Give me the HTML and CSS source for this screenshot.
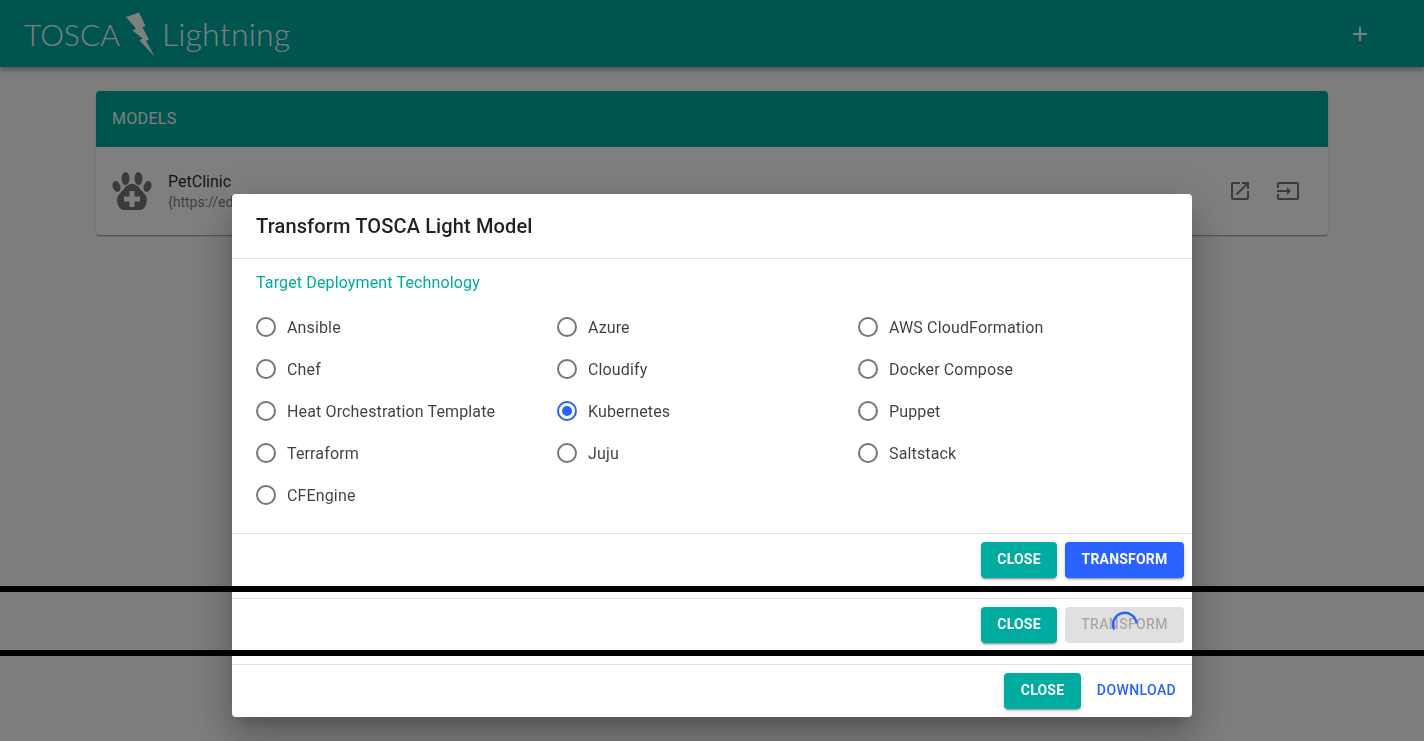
FILE: index.html
```html
<!DOCTYPE html>
<html lang="en">
  <head>
    <meta charset="UTF-8" />
    <meta name="viewport" content="width=device-width, initial-scale=1.0" />
    <title>TOSCA Lightning</title>
    <link rel="stylesheet" href="styles.css">
  </head>
  <body>
    <header class="topbar">
      <div class="logo">
        <span>TOSCA</span>
        <svg class="bolt" width="34" height="48" viewBox="124 8 34 48">
          <polygon fill="#fff" points="126,15 139,10.5 145.5,24 142.5,25.5 149,37.5 146,38.5 154.5,54.5 139.5,38.5 142.5,36.5 132.5,28.5 136,26.5" />
        </svg>
        <span class="logo-second">Lightning</span>
      </div>
      <svg class="add" width="24" height="24" viewBox="0 0 24 24">
        <path d="M19 13h-6v6h-2v-6H5v-2h6V5h2v6h6v2z" />
      </svg>
    </header>

    <main class="page">
      <section class="card">
        <h2 class="card-title">MODELS</h2>
        <div class="model">
          <svg class="paw" width="40" height="38" viewBox="0 0 40 38">
            <ellipse cx="4.500" cy="14.500" rx="3.800" ry="5.600" transform="rotate(-18 4.500 14.500)" />
            <ellipse cx="13.500" cy="6.500" rx="4" ry="6.500" />
            <ellipse cx="26.500" cy="6.500" rx="4" ry="6.500" />
            <ellipse cx="35.500" cy="14.500" rx="3.800" ry="5.600" transform="rotate(18 35.500 14.500)" />
            <path fill-rule="evenodd" d="M20 12c4 0 6.500 2.500 8.500 5.500 1.500 2.300 4 3.800 5.500 6.500 1.700 3.500 1 10-3 13-1.200.8-2.500 1-4 1H13c-1.500 0-2.800-.2-4-1-4-3-4.700-9.500-3-13 1.500-2.700 4-4.200 5.500-6.500C13.500 14.500 16 12 20 12zM17.500 19v5.500H12v5h5.500V35h5v-5.500H28v-5h-5.500V19z" />
          </svg>
          <div class="model-text">
            <div class="model-name">PetClinic</div>
            <div class="model-url">{https://edmm</div>
          </div>
          <div class="model-actions">
            <svg width="24" height="24" viewBox="0 0 24 24">
              <path d="M19 19H5V5h7V3H5c-1.110 0-2 .9-2 2v14c0 1.100.89 2 2 2h14c1.100 0 2-.89 2-2v-7h-2v7zM14 3v2h3.590l-9.830 9.830 1.410 1.410L19 6.410V10h2V3h-7z" />
            </svg>
            <svg width="24" height="24" viewBox="0 0 24 24">
              <path d="M21 3.010H3c-1.100 0-2 .9-2 2V9h2V4.990h18v14.030H3V15H1v4.010c0 1.100.9 1.980 2 1.980h18c1.100 0 2-.88 2-1.980v-14c0-1.110-.9-2-2-2zM11 16l4-4-4-4v3H1v2h10v3z" />
            </svg>
          </div>
        </div>
      </section>
    </main>

    <div class="backdrop">
      <div class="dialog">
        <h1 class="dialog-title">Transform TOSCA Light Model</h1>
        <div class="dialog-content">
          <div class="group-label">Target Deployment Technology</div>
          <div class="radios">
            <div class="radio"><span class="dot"></span>Ansible</div>
            <div class="radio"><span class="dot"></span>Azure</div>
            <div class="radio"><span class="dot"></span>AWS CloudFormation</div>
            <div class="radio"><span class="dot"></span>Chef</div>
            <div class="radio"><span class="dot"></span>Cloudify</div>
            <div class="radio"><span class="dot"></span>Docker Compose</div>
            <div class="radio"><span class="dot"></span>Heat Orchestration Template</div>
            <div class="radio"><span class="dot checked"></span>Kubernetes</div>
            <div class="radio"><span class="dot"></span>Puppet</div>
            <div class="radio"><span class="dot"></span>Terraform</div>
            <div class="radio"><span class="dot"></span>Juju</div>
            <div class="radio"><span class="dot"></span>Saltstack</div>
            <div class="radio"><span class="dot"></span>CFEngine</div>
          </div>
        </div>
        <div class="actions">
          <button class="btn teal">CLOSE</button>
          <button class="btn blue">TRANSFORM</button>
        </div>
        <div class="actions second">
          <button class="btn teal">CLOSE</button>
          <div class="busy">
            <button class="btn disabled">TRANSFORM</button>
            <svg class="spinner" width="28" height="28" viewBox="0 0 28 28">
              <path d="M3.100 18.500A11.800 11.800 0 1 1 25.600 12.500" />
            </svg>
          </div>
        </div>
        <div class="actions third">
          <button class="btn teal wide">CLOSE</button>
          <button class="btn flat">DOWNLOAD</button>
        </div>
      </div>
    </div>

    <div class="cut cut-one"></div>
    <div class="cut cut-two"></div>
  </body>
</html>
```

FILE: styles.css
```css
* {
  box-sizing: border-box;
}

html,
body {
  height: 741px;
  overflow: hidden;
}

body {
  margin: 0;
  font-family: Roboto, "Liberation Sans", sans-serif;
  color: rgba(0, 0, 0, 0.87);
  background-color: #fafafa;
}

.topbar {
  display: flex;
  align-items: center;
  justify-content: space-between;
  height: 67px;
  padding: 0 52px 0 24px;
  color: #fff;
  background-color: #00ab9f;
  box-shadow: 0 2px 4px -1px rgba(0, 0, 0, 0.2), 0 4px 5px rgba(0, 0, 0, 0.14), 0 1px 10px rgba(0, 0, 0, 0.12);
}

.logo {
  display: flex;
  align-items: center;
  font-family: Lato, sans-serif;
  font-size: 30px;
  font-weight: 300;
}

.logo-second {
  font-size: 32px;
  letter-spacing: 0.2px;
}

.bolt {
  margin: 0 4px;
}

.add {
  fill: #fff;
}

.page {
  padding: 24px 96px;
}

.card {
  overflow: hidden;
  background-color: #fff;
  border-radius: 4px;
  box-shadow: 0 2px 1px -1px rgba(0, 0, 0, 0.2), 0 1px 1px rgba(0, 0, 0, 0.14), 0 1px 3px rgba(0, 0, 0, 0.12);
}

.card-title {
  height: 56px;
  margin: 0;
  padding: 0 16px;
  font-size: 16px;
  font-weight: 400;
  line-height: 55px;
  letter-spacing: 0.3px;
  color: #fff;
  background-color: #00ab9f;
}

.model {
  display: flex;
  align-items: center;
  height: 88px;
  padding: 0 16px;
}

.paw {
  fill: #757575;
}

.model-text {
  flex: 1;
  margin-left: 16px;
  padding-top: 2px;
}

.model-name {
  font-size: 16px;
  line-height: 20px;
}

.model-url {
  font-size: 14px;
  line-height: 20px;
  color: rgba(0, 0, 0, 0.54);
}

.model-actions {
  display: flex;
  gap: 24px;
  margin-right: 12px;
}

.model-actions svg {
  fill: rgba(0, 0, 0, 0.54);
}

.backdrop {
  position: fixed;
  top: 0;
  right: 0;
  bottom: 0;
  left: 0;
  display: flex;
  justify-content: center;
  padding-top: 194px;
  background-color: rgba(0, 0, 0, 0.5);
}

.dialog {
  width: 960px;
  height: 523px;
  background-color: #fff;
  border-radius: 4px;
  box-shadow: 0 11px 15px -7px rgba(0, 0, 0, 0.2), 0 24px 38px 3px rgba(0, 0, 0, 0.14), 0 9px 46px 8px rgba(0, 0, 0, 0.12);
}

.dialog-title {
  height: 64px;
  margin: 0;
  padding: 16px 24px;
  font-size: 20px;
  font-weight: 500;
  line-height: 32px;
  letter-spacing: 0.14px;
}

.dialog-content {
  height: 275px;
  padding: 14px 24px 0;
  border-top: 1px solid #e0e0e0;
}

.group-label {
  font-size: 16px;
  line-height: 20px;
  color: #00ab9f;
  letter-spacing: 0.14px;
}

.radios {
  display: grid;
  grid-template-columns: repeat(3, 301px);
  grid-auto-rows: 42px;
  margin-top: 13px;
}

.radio {
  display: flex;
  align-items: center;
  font-size: 16px;
  color: rgba(0, 0, 0, 0.75);
  letter-spacing: 0.14px;
}

.dot {
  display: flex;
  align-items: center;
  justify-content: center;
  width: 20px;
  height: 20px;
  margin-right: 11px;
  border: 2px solid #757575;
  border-radius: 50%;
}

.dot.checked {
  border-color: #2962ff;
}

.dot.checked::after {
  width: 10px;
  height: 10px;
  content: "";
  background-color: #2962ff;
  border-radius: 50%;
}

.actions {
  display: flex;
  justify-content: flex-end;
  gap: 8px;
  padding: 8px;
  border-top: 1px solid #e0e0e0;
}

.actions.second {
  margin-top: 12px;
}

.actions.third {
  margin-top: 13px;
}

.btn {
  width: auto;
  height: 36px;
  padding: 0 0 2px;
  font: inherit;
  font-size: 14px;
  font-weight: 700;
  letter-spacing: 0.2px;
  border: 0;
  border-radius: 4px;
}

.teal,
.blue {
  color: #fff;
  box-shadow: 0 3px 1px -2px rgba(0, 0, 0, 0.2), 0 2px 2px rgba(0, 0, 0, 0.14), 0 1px 5px rgba(0, 0, 0, 0.12);
}

.teal {
  width: 76px;
  background-color: #00ab9f;
}

.teal.wide {
  width: 77px;
}

.blue,
.disabled {
  width: 119px;
}

.blue {
  background-color: #2962ff;
}

.disabled {
  font-weight: 500;
  letter-spacing: 0.35px;
  color: rgba(0, 0, 0, 0.26);
  background-color: #e0e0e0;
}

.flat {
  width: 95px;
  font-weight: 500;
  letter-spacing: 0.4px;
  color: #2962ff;
  background: none;
}

.busy {
  position: relative;
}

.spinner {
  position: absolute;
  top: 4px;
  left: 46px;
  fill: none;
  stroke: #2962ff;
  stroke-width: 2.400;
}

.cut {
  position: fixed;
  right: 0;
  left: 0;
  height: 6px;
  background-color: #000;
}

.cut-one {
  top: 586px;
}

.cut-two {
  top: 650px;
}
```
